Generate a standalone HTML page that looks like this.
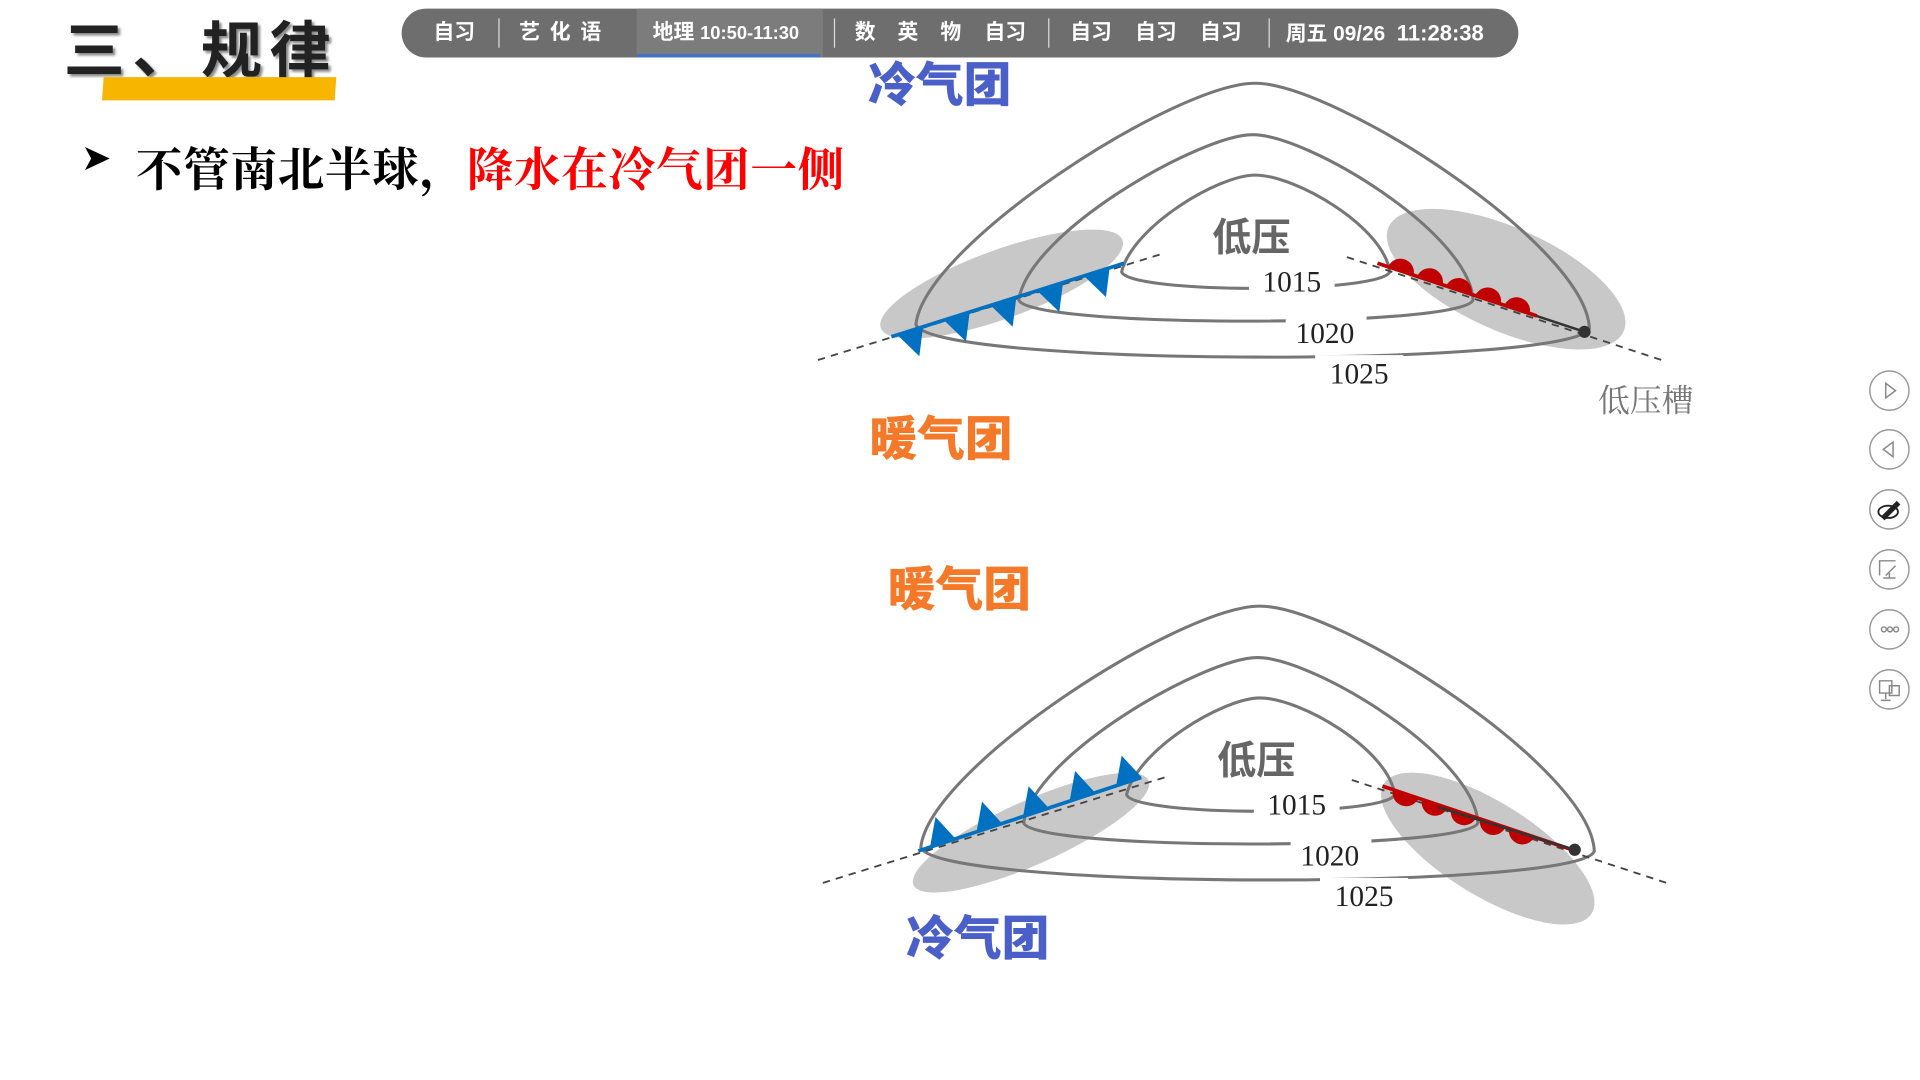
<!DOCTYPE html>
<html><head><meta charset="utf-8"><style>
html,body{margin:0;padding:0;width:1920px;height:1080px;overflow:hidden;background:#fff}
#w{position:absolute;left:0;top:0;width:1568px;height:882px;transform:scale(1.22449);transform-origin:0 0;font-family:"Liberation Sans","Noto Sans CJK SC",sans-serif}
.tb{position:absolute;left:328px;top:7px;width:912px;height:40px;border-radius:20px;background:#6e6e6e;overflow:hidden}
.tb span{position:absolute;top:0;line-height:40px;color:#fff;font-weight:bold;font-size:17px;white-space:nowrap}
.sep{position:absolute;top:8px;width:1px;height:24px;background:#ddd}
</style></head><body><div id="w">
<div style="position:absolute;left:52px;top:2px;font-size:50px;font-weight:bold;color:#222;letter-spacing:6px;text-shadow:2px 2px 2px #888;font-family:'Noto Sans CJK SC',sans-serif">三、规律</div>
<div style="position:absolute;left:84px;top:63px;width:190px;height:19px;background:#f8b500;transform:skewX(-4deg)"></div>
<div style="position:absolute;left:66px;top:112px;font-size:30px;color:#000">➤</div>
<div style="position:absolute;left:111px;top:108px;font-size:38px;letter-spacing:0.6px;font-weight:bold;font-family:'Noto Serif CJK SC',serif;color:#000;white-space:nowrap">不管南北半球，<span style="color:#f00">降水在冷气团一侧</span></div>

<div class="tb">
<div style="position:absolute;left:192px;top:0;width:152px;height:40px;background:#7c7c7c"></div>
<div style="position:absolute;left:192px;top:37px;width:150px;height:3px;background:#4472c4"></div>
<span style="left:26px">自习</span><div class="sep" style="left:79px"></div>
<span style="left:96px;letter-spacing:8px">艺化语</span>
<span style="left:205px">地理 <span style="position:static;font-size:15px">10:50-11:30</span></span>
<div class="sep" style="left:353px"></div>
<span style="left:370px">数</span><span style="left:405px">英</span><span style="left:440px">物</span><span style="left:476px">自习</span>
<div class="sep" style="left:528px"></div>
<span style="left:546px">自习</span><span style="left:599px">自习</span><span style="left:652px">自习</span>
<div class="sep" style="left:708px"></div>
<span style="left:722px">周五 09/26 &nbsp;<span style="position:static;font-size:18px">11:28:38</span></span>
</div>

<svg width="1568" height="882" style="position:absolute;left:0;top:0">
<defs>
<g id="arcs" fill="none" stroke="#777" stroke-width="2.5">
<path d="M748 265 C755 200 960 68 1025 68 C1090 68 1295 200 1298 268 C1290 300 760 300 748 265 Z"/>
<path d="M832 245 C840 190 980 110 1023 110 C1068 110 1200 190 1203 245 C1195 268 840 268 832 245 Z"/>
<path d="M916 222 C925 185 995 143 1025 143 C1058 143 1130 185 1135 222 C1128 240 922 240 916 222 Z"/>
</g>
<g id="labels">
<g font-family="Liberation Serif,serif" font-size="24" fill="#222" text-anchor="middle">
<rect x="1020" y="212" width="70" height="26" fill="#fff"/><text x="1055" y="238">1015</text>
<rect x="1050" y="256" width="66" height="26" fill="#fff"/><text x="1082" y="280">1020</text>
<rect x="1074" y="290" width="72" height="26" fill="#fff"/><text x="1110" y="313">1025</text>
</g>
<text x="1022" y="205" text-anchor="middle" font-size="32" font-weight="bold" fill="#666" font-family="Noto Sans CJK SC,sans-serif">低压</text>
</g>
</defs>
<g>
<ellipse cx="818" cy="232" rx="105" ry="28" transform="rotate(-20 818 232)" fill="#c8c8c8"/>
<ellipse cx="1230" cy="228" rx="105" ry="42" transform="rotate(24 1230 228)" fill="#c8c8c8"/>
<use href="#arcs"/>
<line x1="668" y1="294" x2="950" y2="207" stroke="#444" stroke-width="1.5" stroke-dasharray="6,5"/>
<line x1="1100" y1="210" x2="1360" y2="295" stroke="#444" stroke-width="1.5" stroke-dasharray="6,5"/>
<line x1="728" y1="275" x2="918" y2="215" stroke="#0070c0" stroke-width="3"/>
<g fill="#0070c0">
<path d="M732.8 273.5L753.8 266.9L750.8 290.9Z"/>
<path d="M770.9 261.5L791.9 254.9L788.9 278.9Z"/>
<path d="M809 249.4L830 242.8L827 266.8Z"/>
<path d="M847.1 237.4L868.1 230.8L865.1 254.8Z"/>
<path d="M885.2 225.3L906.2 218.7L903.2 242.7Z"/>
</g>
<line x1="1125" y1="215" x2="1294" y2="271" stroke="#333" stroke-width="2"/>
<line x1="1125" y1="215" x2="1255" y2="258" stroke="#c00000" stroke-width="3"/>
<g fill="#c00000">
<path d="M1133.6 217.9A11 11 0 0 1 1154.4 224.8Z"/>
<path d="M1157.3 225.7A11 11 0 0 1 1178.1 232.6Z"/>
<path d="M1181 233.6A11 11 0 0 1 1201.8 240.4Z"/>
<path d="M1204.8 241.4A11 11 0 0 1 1225.6 248.3Z"/>
<path d="M1228.5 249.3A11 11 0 0 1 1249.3 256.1Z"/>
</g>
<circle cx="1294" cy="271" r="5" fill="#333"/>
<use href="#labels"/>
</g>
<text x="1305" y="336" font-size="26" fill="#777" font-family="Noto Serif CJK SC,serif">低压槽</text>
<g font-size="39" font-weight="900" font-family="Noto Sans CJK SC,sans-serif">
<text x="709" y="83" fill="#4a5fc8">冷气团</text>
<text x="710" y="372" fill="#f47a2a">暖气团</text>
<text x="725" y="495" fill="#f47a2a">暖气团</text>
<text x="740" y="780" fill="#4a5fc8">冷气团</text>
</g>
<g transform="translate(4 427)">
<ellipse cx="838" cy="253" rx="105" ry="26" transform="rotate(-24 838 253)" fill="#c8c8c8"/>
<ellipse cx="1211" cy="266" rx="100" ry="38" transform="rotate(32 1211 266)" fill="#c8c8c8"/>
<use href="#arcs"/>
<line x1="668" y1="294" x2="950" y2="207" stroke="#444" stroke-width="1.5" stroke-dasharray="6,5"/>
<line x1="1100" y1="210" x2="1360" y2="295" stroke="#444" stroke-width="1.5" stroke-dasharray="6,5"/>
<line x1="746" y1="268" x2="928" y2="208" stroke="#0070c0" stroke-width="3"/>
<g fill="#0070c0">
<path d="M755.5 264.9L776.4 258L760 240.2Z"/>
<path d="M793.5 252.4L814.4 245.5L798 227.7Z"/>
<path d="M831.5 239.8L852.4 232.9L836 215.1Z"/>
<path d="M869.5 227.3L890.4 220.4L874 202.6Z"/>
<path d="M907.5 214.8L928.4 207.9L912 190.1Z"/>
</g>
<line x1="1125" y1="215" x2="1280" y2="267" stroke="#c00000" stroke-width="3"/>
<g fill="#c00000">
<path d="M1133.6 217.9A11 11 0 0 0 1154.4 224.8Z"/>
<path d="M1157.3 225.7A11 11 0 0 0 1178.1 232.6Z"/>
<path d="M1181 233.6A11 11 0 0 0 1201.8 240.4Z"/>
<path d="M1204.8 241.4A11 11 0 0 0 1225.6 248.3Z"/>
<path d="M1228.5 249.3A11 11 0 0 0 1249.3 256.1Z"/>
</g>
<line x1="1170" y1="232" x2="1282" y2="267" stroke="#333" stroke-width="2"/>
<circle cx="1282" cy="267" r="5" fill="#333"/>
<use href="#labels"/>
</g>
<g fill="#fff" stroke="#999" stroke-width="1.2">
<circle cx="1543" cy="319" r="16"/><circle cx="1543" cy="367" r="16"/><circle cx="1543" cy="416" r="16"/><circle cx="1543" cy="465" r="16"/><circle cx="1543" cy="514" r="16"/><circle cx="1543" cy="563" r="16"/>
</g>
<g fill="none" stroke="#888" stroke-width="1.2">
<path d="M1540 313L1548 319L1540 325Z"/><path d="M1546 361L1538 367L1546 373Z"/>
<circle cx="1538.5" cy="514" r="2"/><circle cx="1543.5" cy="514" r="2"/><circle cx="1548.5" cy="514" r="2"/>
<path d="M1535 470 L1535 458 L1548 458 M1540 470 L1548 462 M1538 472 h10 M1543 468 v4"/>
<path d="M1535 566 v-10 h10 v10 z M1540 566 v5 M1536 572 h8 M1543 560 h8 v8 h-8z"/>
</g>
<path d="M1536 422 L1549 409 L1552 412 L1539 425 Z" fill="#222"/>
<ellipse cx="1542" cy="418" rx="8" ry="5" fill="none" stroke="#222" stroke-width="1.5"/>
</svg>
</div></body></html>
